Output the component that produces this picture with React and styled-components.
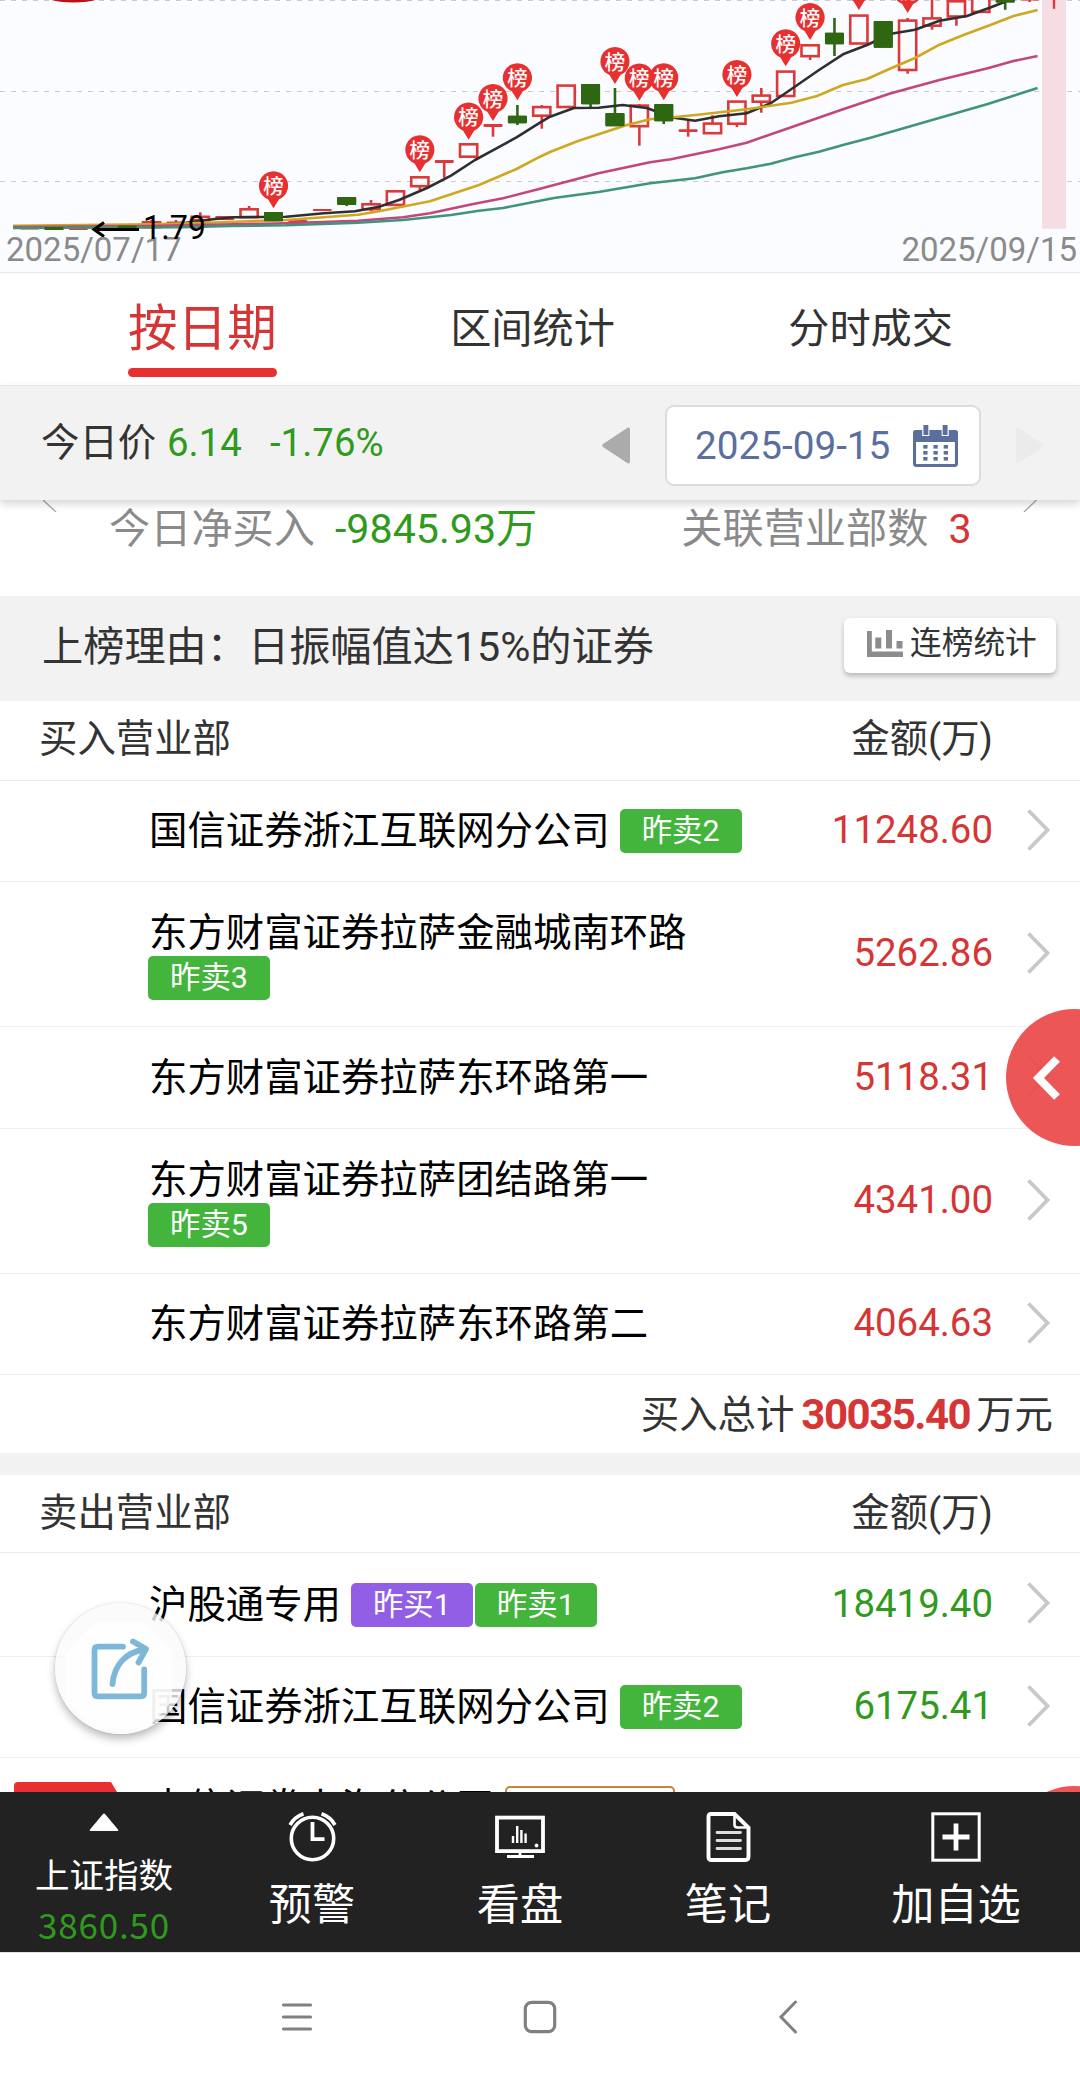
import styled, { createGlobalStyle } from "styled-components"

const RED = "#d63535"
const GREEN = "#2f9a1c"
const UP = "#dc3a3a"
const DOWN = "#2f6612"

const FIRST_X = 29.6
const STEP = 24.39
const BODY = 19

// [kind, high, top, bottom, low] in chart pixels, f = filled red, u = hollow red, d = green
const candles = [
  ["f", 228, 228, 229.5, 229],
  ["d", 228, 227, 230, 229],
  ["f", 228, 225.5, 230, 229],
  ["f", 226, 225.5, 227, 227],
  ["d", 224, 225.5, 228, 228],
  ["u", 220, 221.5, 228, 228],
  ["f", 220, 221.5, 224, 224],
  ["u", 212.3, 216, 221, 221],
  ["f", 217, 216, 220, 219],
  ["u", 206, 208.5, 218, 218],
  ["d", 212, 212, 221.3, 221.3],
  ["f", 221, 220, 222.7, 222],
  ["f", 210, 209, 211, 210],
  ["d", 197, 197, 205, 206],
  ["u", 200, 203.5, 210, 211.3],
  ["u", 191, 190.5, 205.7, 205],
  ["u", 177, 176.5, 187, 190],
  ["f", 161, 160, 163, 177.7],
  ["u", 144, 143.5, 157.5, 157],
  ["f", 125, 124, 127, 136.7],
  ["d", 105, 115.7, 123.3, 125],
  ["u", 105, 106.3, 116.5, 128.7],
  ["u", 85, 84.8, 107.8, 107],
  ["d", 84, 84, 104.3, 108.7],
  ["d", 88, 113, 126.3, 126],
  ["u", 104, 104.8, 127, 145.7],
  ["d", 104, 104, 121.3, 124],
  ["f", 121, 129.3, 132, 136.7],
  ["u", 115.3, 122.8, 134, 134],
  ["u", 101, 100.8, 124.5, 127],
  ["u", 88, 94.8, 102.5, 112.7],
  ["u", 71, 70.8, 96.8, 96],
  ["u", 45, 44.5, 57, 60],
  ["d", 18, 32.7, 44.3, 56],
  ["u", 15, 14.8, 44.3, 44],
  ["d", 21, 21, 47.7, 47],
  ["u", 18, 19.8, 70.8, 73.7],
  ["u", -6, 17.6, 26.5, 29.7],
  ["u", 0, 0.5, 17.3, 25.7],
  ["u", -5, -5, 12.7, 12],
  ["d", -5, -5, 2.6, 9.8],
  ["f", -5, -5, 0.5, 2],
  ["f", -5, -5, -2, 8.8],
]

// [candle index, y of the pin's tip]
const pins = [
  [10, 207.3], [16, 171.3], [18, 138.7], [19, 120], [20, 99.3], [24, 83], [25, 99.7],
  [26, 99.3], [29, 96], [31, 65.3], [32, 39], [34, 9], [36, 12],
]

const averages = [
  { color: "#2f2f31", points: "13,227 151,225.5 186,222.7 213,219.3 234,217.3 286,216.7 324,213.3 355,211.3 379,206.7 399,200 427,188 451,175.7 475,160 496,148.7 516.5,137.3 540,122.7 550,116.7 574,108 598.5,107.7 622.6,105 646.7,108 674,117.7 695,120.7 719,116.3 746.6,113.3 770.7,103.3 794.8,86.7 819,70 843,54.3 867,45 891,33.7 915,29.7 939.5,20.7 967,16 991,7.3 1005,1.7 1012,-2" },
  { color: "#cfa820", points: "13,225.7 151,224.3 207,222.7 286,220 358,214.7 379,211.3 430,201.3 479,185 516.5,169 540,156.7 550,152 578,141 626,125.3 650,119.3 678,116.7 698,114.7 746.6,109.3 791.4,102.7 817,96 843,85 867,79 891,68.3 915,58 939.5,44.7 963.5,35 991,24.7 1013.5,16 1037.6,10" },
  { color: "#c1477e", points: "13,227 151,226 286,223.3 358,220.7 403,217.3 430,213.3 472,204.3 503,198.3 540,188.7 598.5,173.3 650,162.3 671,159.3 719,149.3 746.6,142.7 794.8,126 843,109.3 891,93.3 939.5,80 987.7,68.3 1013.5,61 1037.6,56" },
  { color: "#3f9479", points: "13,228 182.5,227.3 230.7,226 286,225.3 358,222.7 403,220 451,215 479,210.7 503,208 540,200.7 554,198 578,194.7 598.5,192 650,183.3 695,178.3 722.5,172.3 746.6,168.3 770.7,163.7 794.8,157.3 819,151.7 843,145 870.6,137.7 987.7,104 1037.6,88" },
]

const buyers = [
  { name: "国信证券浙江互联网分公司", tags: [["昨卖2"]], amount: "11248.60", height: 101 },
  { name: "东方财富证券拉萨金融城南环路", tags: [["昨卖3"]], amount: "5262.86", height: 145, wrap: true },
  { name: "东方财富证券拉萨东环路第一", tags: [], amount: "5118.31", height: 102 },
  { name: "东方财富证券拉萨团结路第一", tags: [["昨卖5"]], amount: "4341.00", height: 145, wrap: true },
  { name: "东方财富证券拉萨东环路第二", tags: [], amount: "4064.63", height: 101 },
]

const sellers = [
  { name: "沪股通专用", tags: [["昨买1", "buy"], ["昨卖1"]], amount: "18419.40", height: 104 },
  { name: "国信证券浙江互联网分公司", tags: [["昨卖2"]], amount: "6175.41", height: 101 },
]

const Chart = () => (
  <ChartBox>
    <svg width="1080" height="272" viewBox="0 0 1080 272">
      {[0.5, 91.5, 181.5].map((y) => (
        <line key={y} x1="0" x2="1080" y1={y} y2={y} stroke="#cacacc" strokeWidth="1.2" strokeDasharray="5 6" />
      ))}
      <ellipse cx="73.5" cy="-8" rx="34" ry="10.5" fill="#bf1010" />
      {candles.map(([kind, high, top, bottom, low], i) => {
        const x = FIRST_X + STEP * i
        const color = kind === "d" ? DOWN : UP
        const hollow = kind === "u"
        return (
          <g key={i}>
            <line x1={x} x2={x} y1={high} y2={low} stroke={color} strokeWidth="2.6" />
            <rect
              x={x - BODY / 2 + (hollow ? 0.9 : 0)}
              y={top + (hollow ? 0.8 : 0)}
              width={BODY - (hollow ? 1.8 : 0)}
              height={bottom - top - (hollow ? 1.6 : 0)}
              rx={hollow ? 0 : 1}
              fill={hollow ? "#fbfcff" : color}
              stroke={hollow ? color : "none"}
              strokeWidth="2.6"
            />
          </g>
        )
      })}
      {averages.map((line) => (
        <polyline key={line.color} points={line.points} fill="none" stroke={line.color} strokeWidth="2.6" strokeLinejoin="round" />
      ))}
      {candles.map(([kind, , top, bottom], i) =>
        kind === "d" ? (
          <rect key={i} x={FIRST_X + STEP * i - 9.5} y={top} width="19" height={bottom - top} rx="1" fill={DOWN} />
        ) : null
      )}
      <rect x="1042" y="0" width="24" height="228.7" fill="#f6dde3" />
      <line x1="1054" x2="1054" y1="0" y2="8.8" stroke={UP} strokeWidth="2.4" />
      {pins.map(([i, tip]) => (
        <g key={i} transform={`translate(${FIRST_X + STEP * i} ${tip + 0.5})`}>
          <path d="M0 0.5 L-5.5 -8.5 A14.6 14.6 0 1 1 5.5 -8.5 Z" fill="#e73030" />
          <PinText x="0" y="-14">榜</PinText>
        </g>
      ))}
      <path d="M139 229.5H94 M104 222.5L94 229.5L104 236.5" fill="none" stroke="#000" strokeWidth="3" />
      <AxisText x="6" y="261">2025/07/17</AxisText>
      <AxisText x="1077" y="261" textAnchor="end">2025/09/15</AxisText>
      <LowText x="143" y="238.500">1.79</LowText>
    </svg>
  </ChartBox>
)

const CalendarIcon = () => (
  <svg width="45" height="42" viewBox="0 0 44 42" preserveAspectRatio="none">
    <rect x="1.5" y="6.5" width="41" height="34" rx="2" fill="#fff" stroke="#5b6f9f" strokeWidth="3" />
    <path d="M0 17V8q0-3 3-3h38q3 0 3 3v9z" fill="#5b6f9f" />
    <path d="M9 0h7v11H9zM28 0h7v11h-7z" fill="#fff" />
    <path d="M10.2 0h4.8v10h-4.8zM29 0h4.8v10H29z" fill="#5b6f9f" />
    {[20, 26, 32].map((y) =>
      [10, 20, 30].map((x) => <rect key={`${x}-${y}`} x={x} y={y} width="4.2" height="3.6" fill="#5b6f9f" />)
    )}
  </svg>
)

const BarsIcon = () => (
  <svg width="36" height="27" viewBox="0 0 36 27" fill="#8c8c8c">
    <path d="M0 1h4.8v20.5H36V27H0zM8.3 7.5h6V18.5h-6zM19 0h6v18.5h-6zM29.5 11h6v7.5h-6z" />
  </svg>
)

const Chevron = () => (
  <svg width="24" height="42" viewBox="0 0 24 42">
    <path d="M1.5 1.5L20.5 21L1.5 40.5" fill="none" stroke="#c8c8c8" strokeWidth="3.8" />
  </svg>
)

const SeatRow = ({ seat, color }) => (
  <Row $height={seat.height}>
    <Seat $wrap={seat.wrap}>
      <SeatName>{seat.name}</SeatName>
      {seat.tags.length > 0 && (
        <Tags $wrap={seat.wrap}>
          {seat.tags.map(([label, kind]) => (
            <Tag key={label} $kind={kind}>{label}</Tag>
          ))}
        </Tags>
      )}
    </Seat>
    <Amount $color={color}>{seat.amount}</Amount>
    <Chevron />
  </Row>
)

const AlarmIcon = () => (
  <svg width="49" height="50" viewBox="0 0 49 50" fill="none" stroke="#fff" strokeWidth="3.6">
    <circle cx="24.5" cy="26.5" r="21.2" />
    <path d="M24.5 10V27.2H36.5" strokeWidth="3.8" />
    <path d="M2 13Q6.5 5 15.5 1.8M47 13Q42.5 5 33.5 1.8" strokeWidth="3.6" />
  </svg>
)

const MonitorIcon = () => (
  <svg width="50" height="50" viewBox="0 0 50 50" fill="none" stroke="#fff" strokeWidth="3.8">
    <rect x="2" y="5.6" width="46" height="33.5" />
    <path d="M18 31V24M22.2 31V14M26.4 31V18M30.6 31V21.5" strokeWidth="2.4" />
    <circle cx="41.5" cy="33.500" r="1.9" fill="#fff" stroke="none" />
    <path d="M25 39V44M12 44.5H39" strokeWidth="2.8" />
  </svg>
)

const NoteIcon = () => (
  <svg width="45" height="50" viewBox="0 0 45 50" fill="none" stroke="#fff" strokeWidth="3.9">
    <path d="M5 2H28.5L42.5 15.5V44.5Q42.5 48 39.5 48H5.5Q2.5 48 2.5 45V5Q2.5 2 5 2Z" />
    <path d="M28.5 2V12.5Q28.500 15.5 31.5 15.5H42.5" strokeWidth="2.6" />
    <path d="M11 20.500H34.5M11 28.5H34.5M11 36.5H34.5" strokeWidth="2.8" stroke="#ddd" strokeLinecap="round" />
  </svg>
)

const PlusIcon = () => (
  <svg width="50" height="50" viewBox="0 0 50 50" fill="none" stroke="#fff">
    <rect x="1.8" y="1.800" width="46.4" height="46.4" strokeWidth="3" />
    <path d="M25 11.5V38.5M11.500 25H38.5" strokeWidth="4.8" />
  </svg>
)

const actions = [
  ["预警", AlarmIcon],
  ["看盘", MonitorIcon],
  ["笔记", NoteIcon],
  ["加自选", PlusIcon],
]

export default function App() {
  return (
    <Screen>
      <GlobalStyle />
      <Content>
        <Chart />
        <Tabs>
          <Tab $active>按日期</Tab>
          <Tab>区间统计</Tab>
          <Tab>分时成交</Tab>
        </Tabs>
        <PriceBar>
          <PriceLabel>今日价</PriceLabel>
          <Price>6.14</Price>
          <Change>-1.76%</Change>
          <svg width="28" height="37" viewBox="0 0 28 37">
            <path d="M26 0.5Q28 0 28 2.5V34.5Q28 37 26 36.5L1 20Q-0.5 18.5 1 17Z" fill="#ababab" />
          </svg>
          <DateBox>
            <span>2025-09-15</span>
            <CalendarIcon />
          </DateBox>
          <svg width="28" height="37" viewBox="0 0 28 37">
            <path d="M2 0.5Q0 0 0 2.5V34.5Q0 37 2 36.5L27 20Q28.5 18.5 27 17Z" fill="#ebebeb" />
          </svg>
        </PriceBar>
        <Stats>
          <Edge width="14" height="12" viewBox="0 0 14 12">
            <path d="M0 0L13 12" stroke="#aaa" strokeWidth="1.4" />
          </Edge>
          <StatLabel>今日净买入</StatLabel>
          <StatValue $color={GREEN}>-9845.93万</StatValue>
          <StatLabel $push>关联营业部数</StatLabel>
          <StatValue $color={RED}>3</StatValue>
          <Edge $right width="14" height="12" viewBox="0 0 14 12">
            <path d="M13.5 0L1 12" stroke="#aaa" strokeWidth="1.4" />
          </Edge>
        </Stats>
        <Reason>
          <span>上榜理由：日振幅值达15%的证券</span>
          <StreakButton>
            <BarsIcon />
            连榜统计
          </StreakButton>
        </Reason>
        <ListHead $height={80}>
          <span>买入营业部</span>
          <span>金额(万)</span>
        </ListHead>
        {buyers.map((seat) => (
          <SeatRow key={seat.name} seat={seat} color={RED} />
        ))}
        <Total>
          买入总计<TotalNumber>30035.40</TotalNumber>万元
        </Total>
        <Gap />
        <ListHead $height={78}>
          <span>卖出营业部</span>
          <span>金额(万)</span>
        </ListHead>
        {sellers.map((seat) => (
          <SeatRow key={seat.name} seat={seat} color={GREEN} />
        ))}
        <Row $height={101}>
          <Ribbon />
          <Seat>
            <SeatName>中信证券上海分公司</SeatName>
            <Tags>
              <Tag $kind="outline" />
            </Tags>
          </Seat>
        </Row>
        <SideButton $top={1009}>
          <svg width="32" height="46" viewBox="0 0 32 46">
            <path d="M27 4L8.5 23L27 42" fill="none" stroke="#fff" strokeWidth="8" />
          </svg>
        </SideButton>
        <SideButton $top={1786} />
        <ShareButton>
          <svg width="131" height="131" viewBox="0 0 131 131" fill="none" stroke="#7eb8d8" strokeWidth="5.8" strokeLinecap="round">
            <path d="M40 19H88L117 48V98L92 126H40L11 98V50Z" fill="#fff" fillOpacity="0.7" stroke="none" />
            <path d="M68 43.7H43Q39.500 43.7 39.5 47.2V89.8Q39.5 93.3 43 93.3H85.7Q89.2 93.3 89.2 89.8V66.500" />
            <path d="M57.5 81C59 63 70 49 90 46.5M78 38.5L91 46L83.500 59.500" strokeLinejoin="round" />
          </svg>
        </ShareButton>
      </Content>
      <BottomBar>
        <IndexCell>
          <svg width="30" height="18" viewBox="0 0 30 18">
            <path d="M14 1Q15 0 16 1L29 16.500Q29.5 18 28.5 18H1.5Q0.5 18 1 16.500Z" fill="#fff" />
          </svg>
          <span>上证指数</span>
          <IndexValue>3860.50</IndexValue>
        </IndexCell>
        {actions.map(([label, Icon]) => (
          <Action key={label}>
            <Icon />
            <span>{label}</span>
          </Action>
        ))}
      </BottomBar>
      <SystemNav>
        <svg width="32" height="34" viewBox="0 0 32 34" stroke="#808080" strokeWidth="3.2" strokeLinecap="round">
          <path d="M2.5 5H29.5M2.5 17H29.5M2.5 29H29.5" />
        </svg>
        <svg width="34" height="34" viewBox="0 0 34 34">
          <rect x="2.3" y="2.3" width="29.4" height="29.4" rx="6.5" fill="none" stroke="#808080" strokeWidth="3.2" />
        </svg>
        <svg width="20" height="34" viewBox="0 0 20 34" fill="none" stroke="#808080" strokeWidth="3">
          <path d="M17.5 2L3 17L17.5 32" strokeLinecap="round" />
        </svg>
      </SystemNav>
    </Screen>
  )
}

const GlobalStyle = createGlobalStyle`
  body {
    margin: 0;
    background: #fff;
  }
  *, *::before {
    box-sizing: border-box;
  }
  svg {
    display: block;
    flex: none;
  }
`

const Screen = styled.div`
  display: flex;
  flex-direction: column;
  width: 1080px;
  height: 2082px;
  overflow: hidden;
  background: #fff;
  color: #333;
  font-family: Roboto, "Noto Sans CJK SC", sans-serif;
  font-size: 38.4px;
  white-space: nowrap;
`

const Content = styled.main`
  position: relative;
  flex: none;
  height: 1792px;
  overflow: hidden;
`

const ChartBox = styled.div`
  height: 273px;
  background: #fbfcff;
  border-bottom: 1px solid #e6e8f0;
`

const PinText = styled.text`
  font-size: 20.5px;
  font-weight: 500;
  fill: #fff;
  text-anchor: middle;
`

const AxisText = styled.text`
  font-size: 33px;
  fill: #8a8a8a;
`

const LowText = styled.text`
  font-size: 32.3px;
  fill: #000;
`

const Tabs = styled.div`
  display: flex;
  justify-content: space-between;
  height: 112px;
  padding: 0 127px 0 128px;
`

const Tab = styled.div`
  height: 104px;
  font-size: ${(p) => (p.$active ? "49.6px" : "41.2px")};
  line-height: 112px;
  color: ${(p) => (p.$active ? RED : "#333")};

  &::after {
    content: "";
    display: ${(p) => (p.$active ? "block" : "none")};
    height: 9px;
    margin-top: -17px;
    border-radius: 4.5px;
    background: #e83030;
  }
`

const PriceBar = styled.div`
  position: relative;
  z-index: 1;
  display: flex;
  align-items: center;
  height: 115px;
  padding: 4px 36px 0 41px;
  border-top: 1px solid #e6e6e6;
  background: #f2f2f2;
  box-shadow: 0 4px 8px rgba(0, 0, 0, 0.16);
  line-height: 50px;
`

const PriceLabel = styled.span`
  width: 126px;
  padding-bottom: 4px;
`

const Price = styled.span`
  width: 103px;
  padding-bottom: 4px;
  color: ${GREEN};
`

const Change = styled.span`
  flex: 1;
  padding-bottom: 4px;
  color: ${GREEN};
`

const DateBox = styled.div`
  display: flex;
  align-items: center;
  justify-content: space-between;
  width: 316px;
  height: 81px;
  margin: 0 35px;
  padding: 1px 21px 0 28px;
  border: 2px solid #dcdcdc;
  border-radius: 9px;
  background: #fff;
  color: #5b6f9f;
  font-size: 38.7px;
`

const Stats = styled.div`
  display: flex;
  height: 96px;
  padding: 0 43px;
  line-height: 58px;
  font-size: 41.2px;
`

const Edge = styled.svg`
  margin-left: ${(p) => (p.$right ? "auto" : "0")};
`

const StatLabel = styled.span`
  margin-left: ${(p) => (p.$push ? "144px" : "52px")};
  color: #8a8a8a;
`

const StatValue = styled.span`
  margin-left: 20px;
  color: ${(p) => p.$color};
`

const Reason = styled.div`
  display: flex;
  justify-content: space-between;
  align-items: center;
  height: 105px;
  padding: 0 24px 4px 42px;
  background: #f2f2f2;
  font-size: 41.2px;
  line-height: 54px;
`

const StreakButton = styled.div`
  display: flex;
  align-items: center;
  gap: 7px;
  width: 212px;
  height: 55px;
  margin-bottom: 3px;
  padding: 0 0 3px 23px;
  border-radius: 6px;
  background: #fff;
  box-shadow: 0 3px 5px rgba(0, 0, 0, 0.24);
  font-size: 31.7px;
  line-height: 52px;
`

const ListHead = styled.div`
  display: flex;
  justify-content: space-between;
  height: ${(p) => p.$height}px;
  padding: 0 87px 0 39px;
  border-bottom: 1px solid #ebebeb;
  line-height: 76px;
`

const Row = styled.div`
  display: flex;
  align-items: center;
  height: ${(p) => p.$height}px;
  padding: 0 29px 3px 148px;
  border-bottom: 1px solid #efefef;
`

const Seat = styled.div`
  flex: 1;
  display: flex;
  flex-direction: ${(p) => (p.$wrap ? "column" : "row")};
  padding-top: ${(p) => (p.$wrap ? "5px" : "3px")};
  color: #000;
  line-height: 46px;
`

const SeatName = styled.span`
  padding-left: 1px;
`

const Tags = styled.div`
  display: flex;
  gap: 2px;
  margin: ${(p) => (p.$wrap ? "0" : "1px 0 0 10px")};
`

const tagFill = { buy: "#935ee6", outline: "#fff" }

const Tag = styled.span`
  min-width: ${(p) => (p.$kind === "outline" ? "170px" : "0")};
  height: 44px;
  padding: 0 22px;
  border: ${(p) => (p.$kind === "outline" ? "2px solid #c98238" : "none")};
  border-radius: 5px;
  background: ${(p) => tagFill[p.$kind] || "#43b53c"};
  color: #fff;
  font-size: 30.4px;
  line-height: 43px;
`

const Amount = styled.span`
  margin-right: 34px;
  color: ${(p) => p.$color};
`

const Total = styled.div`
  display: flex;
  justify-content: flex-end;
  height: 78px;
  padding-right: 27px;
  line-height: 80px;
`

const TotalNumber = styled.b`
  margin: 0 6px 0 7px;
  color: ${RED};
  font-size: 42px;
  letter-spacing: -1.500px;
`

const Gap = styled.div`
  height: 22px;
  background: #f2f2f2;
`

const Ribbon = styled.div`
  align-self: flex-start;
  width: 103px;
  height: 44px;
  margin: 24px 31px 0 -134px;
  border-radius: 4px 0 0 0;
  background: #e83030;
  clip-path: polygon(0 0, 97px 0, 103px 10px, 103px 100%, 0 100%);
`

const SideButton = styled.div`
  position: absolute;
  top: ${(p) => p.$top}px;
  left: 1006px;
  display: flex;
  align-items: center;
  width: 137px;
  height: 137px;
  padding-left: 24px;
  border-radius: 50%;
  background: rgba(234, 72, 72, 0.92);
`

const ShareButton = styled.div`
  position: absolute;
  top: 1603px;
  left: 55px;
  width: 131px;
  height: 131px;
  border-radius: 50%;
  background: rgba(250, 250, 250, 0.8);
  box-shadow: 0 5px 9px rgba(0, 0, 0, 0.26), 0 0 2px rgba(0, 0, 0, 0.16);
`

const BottomBar = styled.nav`
  display: flex;
  flex: none;
  height: 160px;
  background: #222;
  color: #fff;
`

const IndexCell = styled.div`
  display: flex;
  flex-direction: column;
  align-items: center;
  width: 208px;
  padding-top: 21px;
  font-size: 34.5px;
  line-height: 52px;

  span:first-of-type {
    margin-top: 19px;
  }
`

const IndexValue = styled.span`
  margin-top: -4px;
  color: ${GREEN};
  font-family: "Noto Sans CJK SC", sans-serif;
  font-size: 35px;
  letter-spacing: 0.8px;
`

const Action = styled.div`
  display: flex;
  flex-direction: column;
  align-items: center;
  width: 208px;
  padding-top: 20px;
  font-size: 43.2px;
  line-height: 60px;

  span {
    margin-top: 14px;
  }

  &:last-child {
    width: 248px;
  }
`

const SystemNav = styled.div`
  display: flex;
  flex: 1;
  padding: 48px 0 0 281px;
  box-shadow: inset 0 1px 0 #e2e2e2;

  svg:nth-child(2) {
    margin: 0 221px 0 210px;
  }
`
